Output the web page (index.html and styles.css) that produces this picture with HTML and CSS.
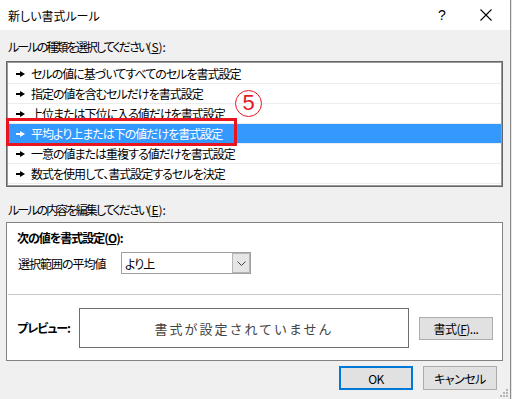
FILE: index.html
```html
<!DOCTYPE html>
<html lang="ja">
<head>
<meta charset="utf-8">
<link rel="stylesheet" href="styles.css">
</head>
<body>
<div class="window">
  <div class="titlebar">
    <span class="title">新しい書式ルール</span>
    <span class="help">?</span>
    <span class="close"><svg width="12" height="12" viewBox="0 0 12 12"><path d="M0.5 0.5L11.5 11.5M11.5 0.5L0.5 11.5" stroke="#000" stroke-width="1.1" fill="none"/></svg></span>
  </div>
  <div class="content">
    <div class="label first">ルールの種類を選択してください<span class="key">(<u>S</u>):</span></div>
    <div class="listwrap">
      <ul class="list">
        <li class="row"><span class="arrow"></span>セルの値に基づいてすべてのセルを書式設定</li>
        <li class="row"><span class="arrow"></span>指定の値を含むセルだけを書式設定</li>
        <li class="row"><span class="arrow"></span>上位または下位に入る値だけを書式設定</li>
        <li class="row selected"><span class="arrow"></span>平均より上または下の値だけを書式設定</li>
        <li class="row"><span class="arrow"></span>一意の値または重複する値だけを書式設定</li>
        <li class="row"><span class="arrow"></span>数式を使用して、書式設定するセルを決定</li>
      </ul>
      <div class="highlight"></div>
      <div class="marker">5</div>
    </div>
    <div class="label second">ルールの内容を編集してください<span class="key">(<u>E</u>):</span></div>
    <div class="editbox">
      <div class="edit-top">
        <div class="bold">次の値を書式設定(<u>O</u>):</div>
        <div class="selrow">
          <span class="sellabel">選択範囲の平均値</span>
          <div class="select"><span class="seltext">より上</span><span class="selbtn"><svg width="9" height="5" viewBox="0 0 9 5"><path d="M0.5 0.5L4.5 4.5L8.5 0.5" stroke="#444" stroke-width="1" fill="none"/></svg></span></div>
        </div>
      </div>
      <div class="edit-bottom">
        <span class="bold prevlabel">プレビュー:</span>
        <div class="preview">書式が設定されていません</div>
        <button class="btn fmt">書式(<u>F</u>)...</button>
      </div>
    </div>
    <div class="footer">
      <button class="btn ok">OK</button>
      <button class="btn">キャンセル</button>
    </div>
  </div>
  <svg class="grip" width="9" height="9" viewBox="0 0 9 9"><g fill="#b5b5b5"><rect x="7" y="1" width="2" height="2"/><rect x="4" y="4" width="2" height="2"/><rect x="7" y="4" width="2" height="2"/><rect x="1" y="7" width="2" height="2"/><rect x="4" y="7" width="2" height="2"/><rect x="7" y="7" width="2" height="2"/></g></svg>
</div>
</body>
</html>
```

FILE: styles.css
```css
* { box-sizing: border-box; }
html, body { margin: 0; padding: 0; }
body {
  background: #e6e6e6;
  font-family: "Noto Sans CJK JP", "Noto Sans", sans-serif;
  font-feature-settings: "palt";
  font-size: 12px;
  letter-spacing: -1px;
  color: #000;
  width: 512px;
  height: 399px;
  overflow: hidden;
}
.window {
  position: relative;
  width: 511px;
  height: 399px;
  background: #f0f0f0;
  border-right: 1px solid #8a8a8a;
}
.titlebar {
  height: 30px;
  background: #fff;
  display: flex;
  align-items: center;
  padding-left: 8px;
}
.title { flex: 1; letter-spacing: 0; }
.help { width: 12px; font-size: 14px; letter-spacing: 0; font-family: "Liberation Sans", sans-serif; margin-right: 30px; }
.close { display: flex; width: 12px; margin-right: 18px; }
.content { padding: 0 7px 0 6px; }
.label { line-height: 20px; padding-left: 2px; letter-spacing: -1.9px; }
.label .key { letter-spacing: 0; }
.label.first { margin-top: 7px; margin-bottom: 4px; }
.label.second { margin-top: 13px; margin-bottom: 2px; }
u { text-decoration: underline; text-underline-offset: 1px; }
.listwrap { position: relative; }
.list {
  list-style: none;
  margin: 0;
  width: 497px;
  height: 126px;
  padding: 1px;
  background: #fff;
  border: 1px solid #666;
  box-shadow: inset 0 0 0 1px #9a9a9a;
}
.list .row:first-child { margin-top: 1px; }
.row {
  height: 20px;
  line-height: 19px;
  border-bottom: 1px solid #ececec;
  display: flex;
  align-items: center;
  padding-left: 8px;
  white-space: nowrap;
}
.row.selected { background: #3399ff; color: #fff; }
.arrow {
  position: relative;
  width: 10px;
  height: 6px;
  margin-right: 5px;
}
.arrow::before {
  content: "";
  position: absolute;
  left: 0; top: 2px;
  width: 5px; height: 2px;
  background: currentColor;
}
.arrow::after {
  content: "";
  position: absolute;
  left: 4px; top: 0;
  border-left: 5px solid currentColor;
  border-top: 3px solid transparent;
  border-bottom: 3px solid transparent;
}
.highlight {
  position: absolute;
  left: 0; top: 57px;
  width: 231px; height: 28px;
  border: 3px solid #e8141e;
}
.marker {
  position: absolute;
  left: 229px; top: 29px;
  width: 27px; height: 27px;
  border: 1.5px solid #e8141e;
  border-radius: 50%;
  color: #e8141e;
  font-family: "Liberation Sans", sans-serif;
  font-size: 22px;
  letter-spacing: 0;
  line-height: 24px;
  text-align: center;
}
.editbox {
  width: 497px;
  height: 139px;
  background: #fff;
  border: 1px solid #828282;
  display: flex;
  flex-direction: column;
}
.edit-top {
  height: 72px;
  padding: 5px 0 0 9px;
  border-bottom: 1px solid #c8c8c8;
  margin: 0 1px;
}
.bold { font-weight: bold; line-height: 20px; }
.selrow { display: flex; align-items: center; margin-top: 4px; }
.sellabel { width: 104px; padding-left: 1px; }
.select {
  width: 130px;
  height: 22px;
  border: 1px solid #a0a0a0;
  display: flex;
  align-items: center;
  padding-left: 3px;
}
.seltext { flex: 1; }
.selbtn {
  width: 18px;
  height: 20px;
  background: #e5e5e5;
  border: 1px solid #b4b4b4;
  display: flex;
  align-items: center;
  justify-content: center;
}
.edit-bottom {
  flex: 1;
  display: flex;
  align-items: center;
  padding-left: 9px;
  padding-top: 1px;
}
.prevlabel { width: 63px; padding-left: 1px; }
.preview {
  width: 330px;
  height: 40px;
  border: 1px solid #6e6e6e;
  display: flex;
  align-items: center;
  justify-content: center;
  color: #444;
  font-size: 13px;
  letter-spacing: 2px;
  font-feature-settings: normal;
}
.btn {
  font-family: inherit;
  font-size: 12px;
  letter-spacing: -0.5px;
  font-feature-settings: "palt";
  color: #000;
  background: #e1e1e1;
  border: 1px solid #adadad;
  width: 74px;
  height: 24px;
  padding: 0;
}
.fmt { margin-left: 10px; height: 23px; }
.footer {
  display: flex;
  justify-content: flex-end;
  gap: 10px;
  margin-top: 5px;
  padding-right: 6px;
}
.ok { border: 2px solid #0078d7; }
.grip { position: absolute; right: 2px; bottom: 2px; }
```
